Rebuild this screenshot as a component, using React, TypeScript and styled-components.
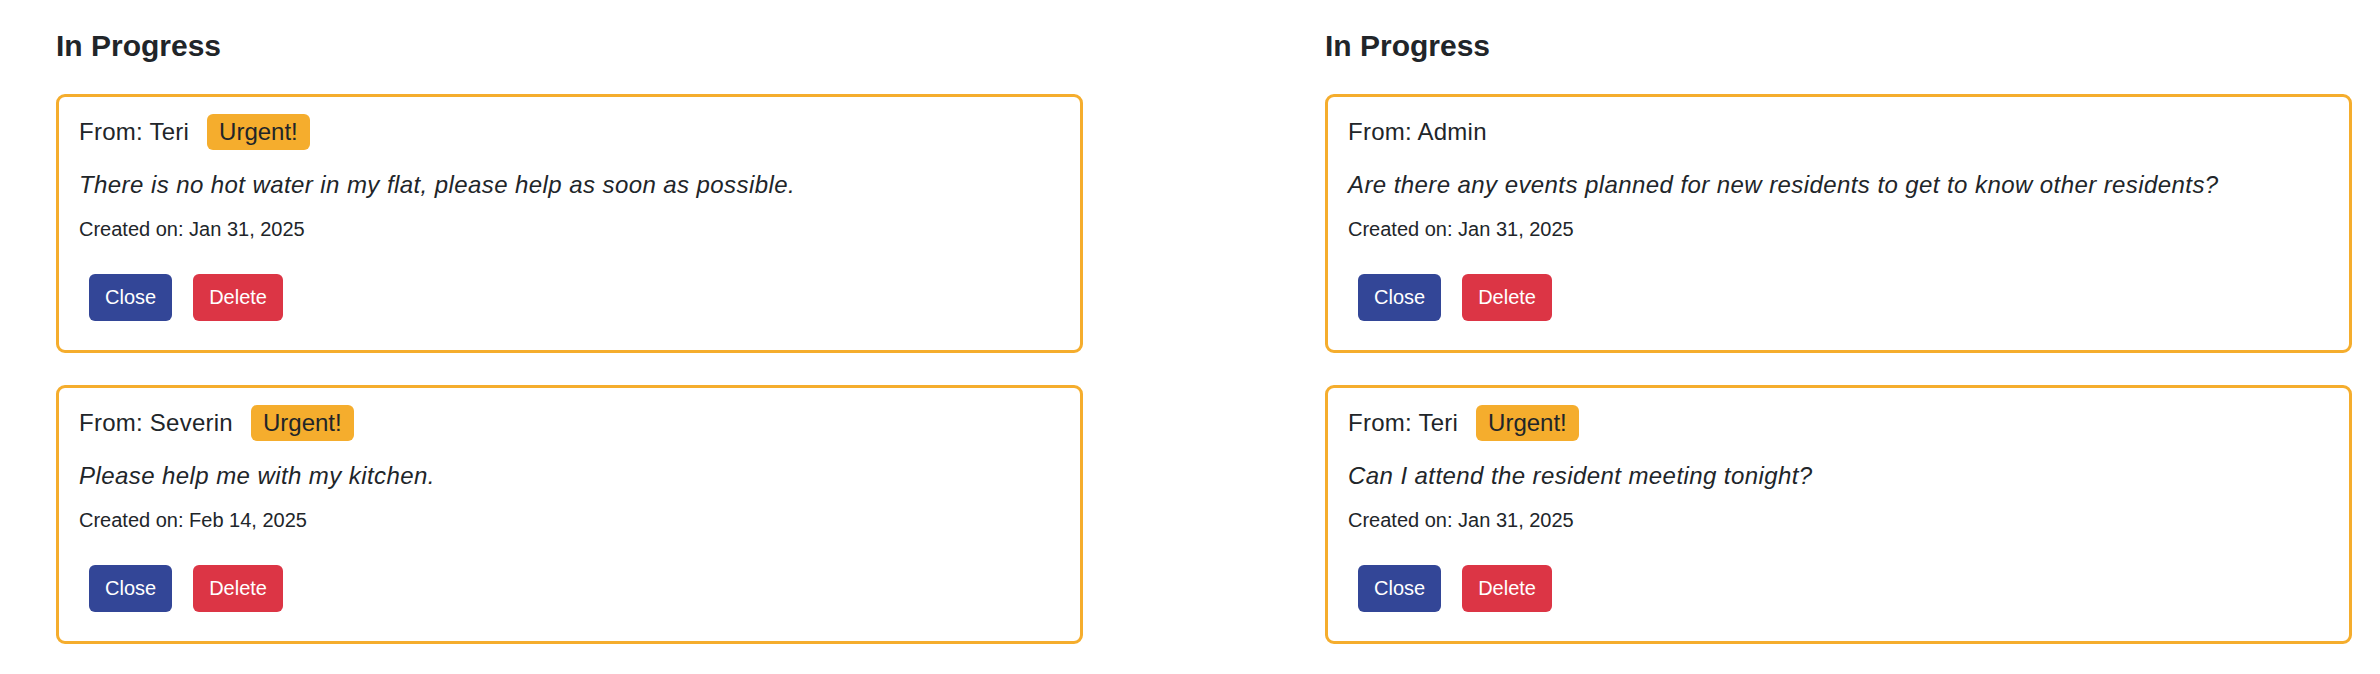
import React from "react";
import styled, { createGlobalStyle } from "styled-components";

const GlobalStyle = createGlobalStyle`
  html, body {
    margin: 0;
    padding: 0;
    background: #ffffff;
  }
  body {
    font-family: "Liberation Sans", Arial, sans-serif;
    color: #212529;
  }
`;

const Page = styled.main`
  display: grid;
  grid-template-columns: 1fr 1fr;
  column-gap: 242px;
  padding: 28px 28px 0 56px;
  box-sizing: border-box;
  width: 2380px;
`;

const Column = styled.section`
  display: flex;
  flex-direction: column;
`;

const Heading = styled.h2`
  margin: 0 0 30px 0;
  font-size: 30px;
  line-height: 36px;
  font-weight: 700;
  color: #212529;
`;

const CardList = styled.div`
  display: flex;
  flex-direction: column;
  gap: 32px;
`;

const Card = styled.article`
  border: 3px solid #f5ad2d;
  border-radius: 9px;
  padding: 17px 20px 29px 20px;
  display: flex;
  flex-direction: column;
  background: #fff;
`;

const HeaderRow = styled.div`
  display: flex;
  align-items: center;
  height: 36px;
  font-size: 24px;
  line-height: 36px;
`;

const Sender = styled.span`
  white-space: pre;
  letter-spacing: 0.25px;
`;

const Badge = styled.span`
  margin-left: 18px;
  background: #f5ad2d;
  color: #212529;
  border-radius: 6px;
  padding: 0 12px;
  height: 36px;
  line-height: 36px;
  font-size: 24px;
`;

const Message = styled.p`
  margin: 17px 0 0 0;
  font-size: 24px;
  line-height: 36px;
  font-style: italic;
  letter-spacing: 0.42px;
`;

const Created = styled.p`
  margin: 11px 0 0 0;
  font-size: 20px;
  line-height: 30px;
`;

const Actions = styled.div`
  display: flex;
  gap: 21px;
  margin-top: 30px;
  padding-left: 10px;
`;

const Button = styled.button<{ $variant: "primary" | "danger" }>`
  font-family: "Liberation Sans", Arial, sans-serif;
  font-size: 20px;
  line-height: 31px;
  padding: 8px 16px;
  border: 0;
  border-radius: 6px;
  color: #ffffff;
  background: ${(p) => (p.$variant === "primary" ? "#334697" : "#dc3545")};
  cursor: pointer;
`;

type Request = {
  from: string;
  urgent: boolean;
  message: string;
  created: string;
};

const columns: Request[][] = [
  [
    {
      from: "Teri",
      urgent: true,
      message: "There is no hot water in my flat, please help as soon as possible.",
      created: "Jan 31, 2025",
    },
    {
      from: "Severin",
      urgent: true,
      message: "Please help me with my kitchen.",
      created: "Feb 14, 2025",
    },
  ],
  [
    {
      from: "Admin",
      urgent: false,
      message: "Are there any events planned for new residents to get to know other residents?",
      created: "Jan 31, 2025",
    },
    {
      from: "Teri",
      urgent: true,
      message: "Can I attend the resident meeting tonight?",
      created: "Jan 31, 2025",
    },
  ],
];

export default function App() {
  return (
    <>
      <GlobalStyle />
      <Page>
        {columns.map((items, ci) => (
          <Column key={ci}>
            <Heading>In Progress</Heading>
            <CardList>
              {items.map((r, i) => (
                <Card key={i}>
                  <HeaderRow>
                    <Sender>From: {r.from}</Sender>
                    {r.urgent && <Badge>Urgent!</Badge>}
                  </HeaderRow>
                  <Message>{r.message}</Message>
                  <Created>Created on: {r.created}</Created>
                  <Actions>
                    <Button $variant="primary">Close</Button>
                    <Button $variant="danger">Delete</Button>
                  </Actions>
                </Card>
              ))}
            </CardList>
          </Column>
        ))}
      </Page>
    </>
  );
}
